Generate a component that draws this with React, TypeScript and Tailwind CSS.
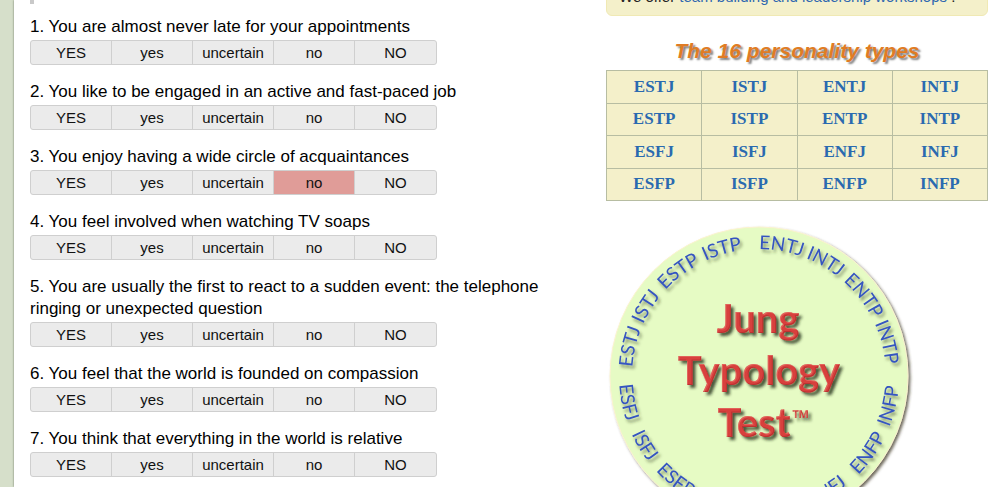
import { useState } from "react";
import clsx from "clsx";

const ANSWERS = ["YES", "yes", "uncertain", "no", "NO"];

const QUESTIONS = [
  "You are almost never late for your appointments",
  "You like to be engaged in an active and fast-paced job",
  "You enjoy having a wide circle of acquaintances",
  "You feel involved when watching TV soaps",
  "You are usually the first to react to a sudden event: the telephone ringing or unexpected question",
  "You feel that the world is founded on compassion",
  "You think that everything in the world is relative",
];

const TYPE_ROWS = [
  ["ESTJ", "ISTJ", "ENTJ", "INTJ"],
  ["ESTP", "ISTP", "ENTP", "INTP"],
  ["ESFJ", "ISFJ", "ENFJ", "INFJ"],
  ["ESFP", "ISFP", "ENFP", "INFP"],
];

interface RingWord {
  text: string;
  // degrees from the left-most point of the ring to the start of the word
  angle: number;
}

const TOP_WORDS: RingWord[] = [
  { text: "ESTJ", angle: 4 },
  { text: "ISTJ", angle: 24 },
  { text: "ESTP", angle: 42.5 },
  { text: "ISTP", angle: 65 },
  { text: "ENTJ", angle: 90 },
  { text: "INTJ", angle: 111.5 },
  { text: "ENTP", angle: 131.5 },
  { text: "INTP", angle: 155.5 },
];

const BOTTOM_WORDS: RingWord[] = [
  { text: "ESFJ", angle: 3.5 },
  { text: "ISFJ", angle: 24.5 },
  { text: "ESFP", angle: 42.5 },
  { text: "ISFP", angle: 64 },
  { text: "ENFJ", angle: 92 },
  { text: "INFJ", angle: 114 },
  { text: "ENFP", angle: 135 },
  { text: "INFP", angle: 158.5 },
];

const arcLength = (angle: number, radius: number) => (angle * Math.PI * radius) / 180;

function Question({ number, text, initial }: { number: number; text: string; initial?: string }) {
  const [answer, setAnswer] = useState(initial);

  return (
    <li className="mb-4">
      <p id={`q${number}`} className="mb-[2px] text-[17px] leading-[22px]">
        {`${number}. ${text}`}
      </p>
      <div
        role="group"
        aria-labelledby={`q${number}`}
        className="grid w-full max-w-[407px] grid-cols-5 divide-x divide-[#cfcfcf] overflow-hidden rounded-[3px] border border-[#cfcfcf] bg-[#ebebeb]"
      >
        {ANSWERS.map((label) => (
          <button
            key={label}
            type="button"
            aria-pressed={answer === label}
            onClick={() => setAnswer(label)}
            className={clsx("h-[23px] text-[15px] leading-[23px] text-[#111]", answer === label && "bg-[#e09c98]")}
          >
            {label}
          </button>
        ))}
      </div>
    </li>
  );
}

function JungLogo() {
  return (
    <svg viewBox="2 0 310 310" className="block w-[310px] shrink-0" role="img" aria-label="Jung Typology Test">
      <defs>
        <path id="ring-top" d="M 28 155 A 127 127 0 0 1 282 155" />
        <path id="ring-bottom" d="M 15 155 A 140 140 0 0 0 295 155" />
        <filter id="disc-shadow" x="-10%" y="-10%" width="120%" height="120%">
          <feDropShadow dx="2" dy="2" stdDeviation="1.5" floodColor="#3f3a2c" floodOpacity="0.75" />
        </filter>
        <filter id="ring-shadow" x="-10%" y="-10%" width="120%" height="120%">
          <feDropShadow dx="2" dy="3" stdDeviation="1.5" floodColor="#2f3a20" floodOpacity="0.55" />
        </filter>
        <filter id="bevel" x="-10%" y="-20%" width="125%" height="150%">
          <feOffset in="SourceAlpha" dx="1" dy="1" result="shifted" />
          <feComposite in="SourceAlpha" in2="shifted" operator="out" result="lit" />
          <feFlood floodColor="#ee7f74" floodOpacity="0.45" />
          <feComposite in2="lit" operator="in" result="highlight" />
          <feOffset in="SourceAlpha" dx="-1" dy="-1" result="shiftedBack" />
          <feComposite in="SourceAlpha" in2="shiftedBack" operator="out" result="dark" />
          <feFlood floodColor="#a5262a" floodOpacity="0.6" />
          <feComposite in2="dark" operator="in" result="lowlight" />
          <feGaussianBlur in="SourceAlpha" stdDeviation="1.8" />
          <feOffset dx="3" dy="3" result="cast" />
          <feFlood floodColor="#1f2a16" floodOpacity="0.8" />
          <feComposite in2="cast" operator="in" result="shadow" />
          <feMerge>
            <feMergeNode in="shadow" />
            <feMergeNode in="SourceGraphic" />
            <feMergeNode in="lowlight" />
            <feMergeNode in="highlight" />
          </feMerge>
        </filter>
      </defs>
      <circle cx="155" cy="155" r="149" fill="#e6fbc4" stroke="#fbf3cf" filter="url(#disc-shadow)" />
      <g className="font-['Lato',sans-serif] text-[19px]" fill="#3554c0" filter="url(#ring-shadow)">
        {TOP_WORDS.map(({ text, angle }) => (
          <text key={text}>
            <textPath href="#ring-top" startOffset={arcLength(angle, 127)}>
              {text}
            </textPath>
          </text>
        ))}
        {BOTTOM_WORDS.map(({ text, angle }) => (
          <text key={text}>
            <textPath href="#ring-bottom" startOffset={arcLength(angle, 140)}>
              {text}
            </textPath>
          </text>
        ))}
      </g>
      <g
        className="font-['Lato',sans-serif] text-[40px] font-bold"
        fill="#d8403c"
        textAnchor="middle"
        filter="url(#bevel)"
      >
        <text x="154" y="112">Jung</text>
        <text x="155" y="164">Typology</text>
        <text x="150" y="216">Test</text>
        <text x="197" y="205" className="font-['Open_Sans',sans-serif] text-[22px]">™</text>
      </g>
    </svg>
  );
}

export default function App() {
  return (
    <div className="flex h-screen overflow-hidden bg-[#d6dfca] pl-[14px] font-['Liberation_Sans',Arial,sans-serif] text-black">
      <main className="flex flex-1 items-start justify-between bg-white pl-4 pr-3 shadow-[0_0_2px_#6b7560]">
        <section className="min-w-0 flex-1 pr-14">
          <div className="mb-3 h-1 w-1 bg-[#c9c9c9]" />
          <ol>
            {QUESTIONS.map((text, i) => (
              <Question key={text} number={i + 1} text={text} initial={i === 2 ? "no" : undefined} />
            ))}
          </ol>
        </section>

        <aside className="w-[382px] shrink-0">
          <p className="-mt-5 rounded-md border border-[#f0e9b4] bg-[#f4f0ca] px-3 pb-[6px] pt-1 text-[15px] leading-6 text-[#222]">
            We offer{" "}
            <a href="#workshops" className="text-[#2f68b0]">
              team building and leadership workshops
            </a>{" "}
            .
          </p>
          <h2 className="mt-[23px] text-center text-[21px] font-bold italic leading-6 text-[#e07c24] [text-shadow:2px_2px_2px_#808080]">
            The 16 personality types
          </h2>
          <table className="mt-[7px] h-[131px] w-full table-fixed border-collapse bg-[#f4f0ca] font-['Liberation_Serif',serif] text-[17px] font-bold">
            <tbody>
              {TYPE_ROWS.map((row) => (
                <tr key={row[0]}>
                  {row.map((type) => (
                    <td key={type} className="border border-[#b7bda2] p-0 text-center leading-6">
                      <a href={`#${type}`} className="text-[#2a6ab0]">
                        {type}
                      </a>
                    </td>
                  ))}
                </tr>
              ))}
            </tbody>
          </table>
          <div className="mt-5">
            <JungLogo />
          </div>
        </aside>
      </main>
    </div>
  );
}
